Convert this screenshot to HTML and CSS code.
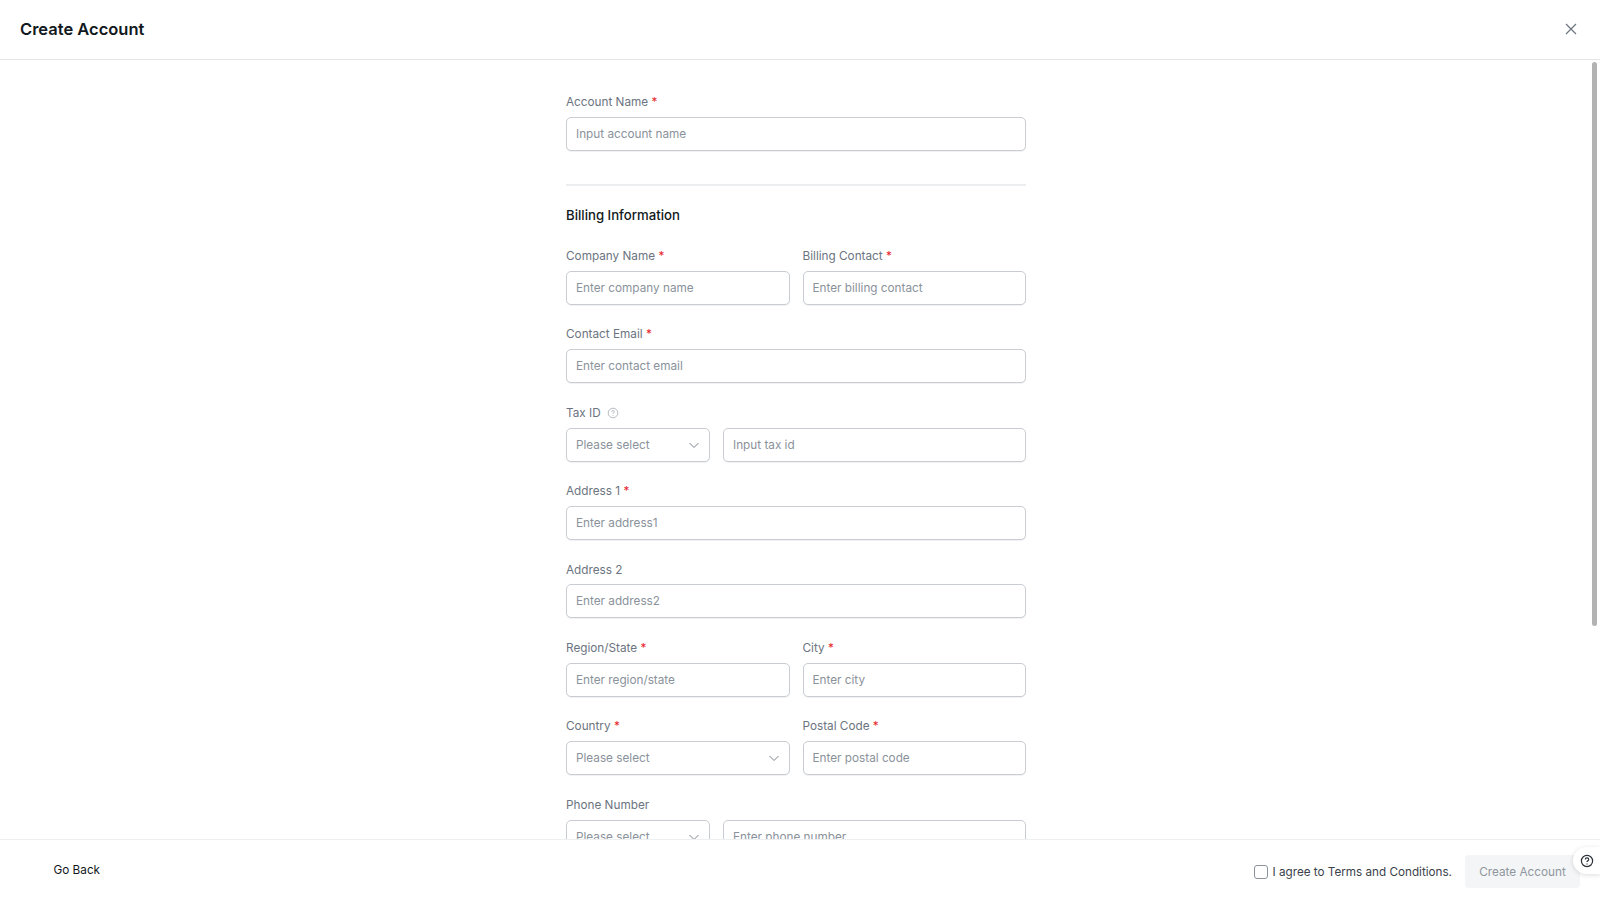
FILE: index.html
```html
<!DOCTYPE html>
<html lang="en">
<head>
  <meta charset="UTF-8">
  <title>Create Account</title>
  <link rel="stylesheet" href="styles.css">
</head>
<body>
  <header class="top-bar">
    <h1>Create Account</h1>
    <button class="close-btn" aria-label="Close">
      <svg width="12" height="12" viewBox="0 0 12 12" fill="none" stroke="#6b7480" stroke-width="1.2"><path d="M1 1l10 10M11 1L1 11"/></svg>
    </button>
  </header>

  <main class="content">
    <div class="scroll-thumb"></div>
    <form class="account-form">
      <div class="field">
        <label>Account Name <span class="req">*</span></label>
        <input type="text" placeholder="Input account name">
      </div>

      <hr class="divider">
      <h2>Billing Information</h2>

      <div class="row">
        <div class="field">
          <label>Company Name <span class="req">*</span></label>
          <input type="text" placeholder="Enter company name">
        </div>
        <div class="field">
          <label>Billing Contact <span class="req">*</span></label>
          <input type="text" placeholder="Enter billing contact">
        </div>
      </div>

      <div class="field">
        <label>Contact Email <span class="req">*</span></label>
        <input type="text" placeholder="Enter contact email">
      </div>

      <div class="field">
        <label>Tax ID <svg class="info" width="12" height="12" viewBox="0 0 12 12" fill="none" stroke="#a3a9b1" stroke-width="0.8"><circle cx="6" cy="6" r="4.8"/><path d="M4.7 4.8c0-1.7 2.6-1.7 2.6 0 0 1-1.3 1-1.3 2"/><path d="M6 8v.7"/></svg></label>
        <div class="row combo">
          <div class="select">Please select
            <svg width="12" height="12" viewBox="0 0 12 12" fill="none" stroke="#7d858e" stroke-width="1"><path d="M1.5 4L6 8.5 10.5 4"/></svg>
          </div>
          <input type="text" placeholder="Input tax id">
        </div>
      </div>

      <div class="field">
        <label>Address 1 <span class="req">*</span></label>
        <input type="text" placeholder="Enter address1">
      </div>

      <div class="field">
        <label>Address 2</label>
        <input type="text" placeholder="Enter address2">
      </div>

      <div class="row">
        <div class="field">
          <label>Region/State <span class="req">*</span></label>
          <input type="text" placeholder="Enter region/state">
        </div>
        <div class="field">
          <label>City <span class="req">*</span></label>
          <input type="text" placeholder="Enter city">
        </div>
      </div>

      <div class="row">
        <div class="field">
          <label>Country <span class="req">*</span></label>
          <div class="select">Please select
            <svg width="12" height="12" viewBox="0 0 12 12" fill="none" stroke="#7d858e" stroke-width="1"><path d="M1.5 4L6 8.5 10.5 4"/></svg>
          </div>
        </div>
        <div class="field">
          <label>Postal Code <span class="req">*</span></label>
          <input type="text" placeholder="Enter postal code">
        </div>
      </div>

      <div class="field">
        <label>Phone Number</label>
        <div class="row combo">
          <div class="select">Please select
            <svg width="12" height="12" viewBox="0 0 12 12" fill="none" stroke="#7d858e" stroke-width="1"><path d="M1.5 4L6 8.5 10.5 4"/></svg>
          </div>
          <input type="text" placeholder="Enter phone number">
        </div>
      </div>
    </form>
  </main>

  <footer class="bottom-bar">
    <a class="back-link">Go Back</a>
    <div class="actions">
      <label class="agree"><input type="checkbox"> I agree to Terms and Conditions.</label>
      <button class="submit-btn" disabled>Create Account</button>
    </div>
    <div class="help-tab">
      <svg width="14" height="14" viewBox="0 0 14 14" fill="none" stroke="#2b3138" stroke-width="1.2"><circle cx="7" cy="7" r="5.6"/><path d="M5.3 5.5c0-2.2 3.4-2.2 3.4 0 0 1.3-1.7 1.3-1.7 2.6"/><path d="M7 9.4v1"/></svg>
    </div>
  </footer>
</body>
</html>
```

FILE: styles.css
```css
* {
  margin: 0;
  padding: 0;
  box-sizing: border-box;
  font-family: 'Inter', sans-serif;
}
body {
  display: flex;
  flex-direction: column;
  height: 100vh;
  overflow: hidden;
  background: #fff;
  color: #6b7480;
  font-size: 11.75px;
}
.top-bar {
  display: flex;
  align-items: center;
  justify-content: space-between;
  flex: none;
  height: 60px;
  padding: 0 23px 1px 20px;
  border-bottom: 1px solid #e3e5e8;
}
.top-bar h1 {
  font-size: 16.5px;
  font-weight: 600;
  color: #111820;
}
.close-btn {
  display: flex;
  background: none;
  border: none;
  cursor: pointer;
}
.content {
  position: relative;
  flex: 1;
  min-height: 0;
  overflow: hidden;
  padding-right: 8px;
}
.scroll-thumb {
  position: absolute;
  top: 2px;
  right: 3px;
  width: 5px;
  height: 564px;
  border-radius: 3px;
  background: #b3b3b3;
}
.account-form {
  display: flex;
  flex-direction: column;
  gap: 21.6px;
  width: 460px;
  margin: 0 auto;
  padding-top: 34px;
}
.field {
  display: flex;
  flex-direction: column;
  gap: 6.8px;
  flex: 1;
  min-width: 0;
}
.field label {
  line-height: 16px;
}
.req {
  color: #e5252a;
}
.info {
  margin-left: 3px;
  vertical-align: -2px;
}
.row {
  display: flex;
  gap: 13px;
}
.combo .select {
  flex: none;
  width: 144px;
}
.combo input {
  flex: 1;
}
input[type="text"], .select {
  width: 100%;
  min-width: 0;
  height: 34px;
  padding: 0 9px;
  border: 1px solid #c9cdd2;
  border-radius: 5px;
  box-shadow: 0 1px 1px rgba(0,0,0,0.06);
  background: #fff;
  font-size: 11.75px;
  color: #4a525b;
  outline: none;
}
input[type="text"]::placeholder {
  color: #8a929b;
  opacity: 1;
}
.select {
  display: flex;
  align-items: center;
  justify-content: space-between;
  color: #8a929b;
}
.divider {
  border: none;
  border-top: 2px solid #eceef0;
  margin-top: 11.5px;
}
h2 {
  font-size: 13.2px;
  font-weight: 500;
  color: #111820;
  line-height: 17px;
  margin-bottom: 1.9px;
}
.bottom-bar {
  position: relative;
  display: flex;
  align-items: center;
  justify-content: space-between;
  flex: none;
  height: 61px;
  padding: 0 20px 0 53.5px;
  background: #fff;
  border-top: 1px solid #eeeff1;
}
.back-link {
  color: #111820;
  margin-top: -1px;
}
.actions {
  display: flex;
  align-items: center;
  gap: 13px;
  margin-top: 3px;
}
.agree {
  display: flex;
  align-items: center;
  gap: 5px;
  color: #3a424b;
  font-size: 11.7px;
}
.agree input {
  appearance: none;
  width: 14px;
  height: 14px;
  border: 1px solid #8a929b;
  border-radius: 3px;
  background: #fff;
}
.submit-btn {
  width: 115px;
  height: 33px;
  border: none;
  border-radius: 4px;
  background: #f4f5f6;
  color: #8f969e;
  font-size: 11.75px;
}
.help-tab {
  position: absolute;
  top: 7px;
  right: 0;
  display: flex;
  align-items: center;
  justify-content: center;
  width: 27px;
  height: 27px;
  border-radius: 14px 0 0 14px;
  background: #fff;
  box-shadow: 0 1px 5px rgba(0,0,0,0.14);
}
```
